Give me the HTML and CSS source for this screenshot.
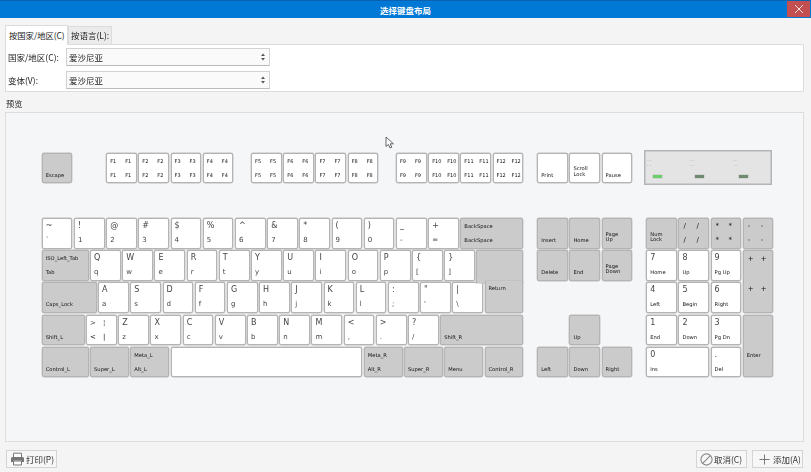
FILE: index.html
```html
<!DOCTYPE html>
<html lang="zh-CN">
<head>
    <meta charset="UTF-8">
    <title>选择键盘布局</title>
    <link rel="stylesheet" href="styles.css">
</head>
<body>
<div class="titlebar">
    <span class="title">选择键盘布局</span>
    <span class="close">
        <svg width="10" height="10" viewBox="0 0 10 10"><path d="M1 1L9 9M9 1L1 9" stroke="#f6dede" stroke-width="1"/></svg>
    </span>
</div>

<div class="content">
    <div class="tabs">
        <span class="tab active">按国家/地区(C)</span>
        <span class="tab">按语言(L):</span>
    </div>
    <div class="panel">
        <div class="field">
            <label>国家/地区(C):</label>
            <div class="combo">爱沙尼亚
                <svg width="4" height="8" viewBox="0 0 5 9"><path d="M2.5 0L5 3.4H0ZM2.5 9L0 5.6H5Z" fill="#555"/></svg>
            </div>
        </div>
        <div class="field">
            <label>变体(V):</label>
            <div class="combo">爱沙尼亚
                <svg width="4" height="8" viewBox="0 0 5 9"><path d="M2.5 0L5 3.4H0ZM2.5 9L0 5.6H5Z" fill="#555"/></svg>
            </div>
        </div>
    </div>

    <div class="preview-label">预览</div>
    <div class="preview">
        <svg class="cursor" width="10" height="13" viewBox="0 0 10 13"><path d="M1 1V10.5L3.4 8.4L5 12L6.8 11.2L5.2 7.8H8.4Z" fill="#fff" stroke="#555" stroke-width="0.9"/></svg>
        <div class="kb">
            <!-- function row -->
            <div class="block main">
                <div class="key dark"><span class="low">Escape</span></div>
                <div class="sp w8"></div>
                <div class="key fn"><span>F1</span><span>F1</span><span>F1</span><span>F1</span></div>
                <div class="key fn"><span>F2</span><span>F2</span><span>F2</span><span>F2</span></div>
                <div class="key fn"><span>F3</span><span>F3</span><span>F3</span><span>F3</span></div>
                <div class="key fn"><span>F4</span><span>F4</span><span>F4</span><span>F4</span></div>
                <div class="sp w4"></div>
                <div class="key fn"><span>F5</span><span>F5</span><span>F5</span><span>F5</span></div>
                <div class="key fn"><span>F6</span><span>F6</span><span>F6</span><span>F6</span></div>
                <div class="key fn"><span>F7</span><span>F7</span><span>F7</span><span>F7</span></div>
                <div class="key fn"><span>F8</span><span>F8</span><span>F8</span><span>F8</span></div>
                <div class="sp w4"></div>
                <div class="key fn"><span>F9</span><span>F9</span><span>F9</span><span>F9</span></div>
                <div class="key fn"><span>F10</span><span>F10</span><span>F10</span><span>F10</span></div>
                <div class="key fn"><span>F11</span><span>F11</span><span>F11</span><span>F11</span></div>
                <div class="key fn"><span>F12</span><span>F12</span><span>F12</span><span>F12</span></div>
            </div>
            <div class="block nav">
                <div class="key"><span class="low">Print</span></div>
                <div class="key"><span class="stack">Scroll<br>Lock</span></div>
                <div class="key"><span class="low">Pause</span></div>
            </div>
            <div class="indicators">
                <div class="ind"><span>···<br>···</span><i class="led on"></i></div>
                <div class="ind"><span>···<br>···</span><i class="led"></i></div>
                <div class="ind"><span>···<br>···</span><i class="led"></i></div>
            </div>

            <!-- main block -->
            <div class="block main">
                <div class="key sym"><span>~</span><span>`</span></div>
                <div class="key sym"><span>!</span><span>1</span></div>
                <div class="key sym"><span>@</span><span>2</span></div>
                <div class="key sym"><span>#</span><span>3</span></div>
                <div class="key sym"><span>$</span><span>4</span></div>
                <div class="key sym"><span>%</span><span>5</span></div>
                <div class="key sym"><span>^</span><span>6</span></div>
                <div class="key sym"><span>&amp;</span><span>7</span></div>
                <div class="key sym"><span>*</span><span>8</span></div>
                <div class="key sym"><span>(</span><span>9</span></div>
                <div class="key sym"><span>)</span><span>0</span></div>
                <div class="key sym"><span>_</span><span>-</span></div>
                <div class="key sym"><span>+</span><span>=</span></div>
                <div class="key dark w16"><span>BackSpace</span><span>BackSpace</span></div>

                <div class="key dark w12"><span>ISO_Left_Tab</span><span>Tab</span></div>
                <div class="key sym"><span>Q</span><span>q</span></div>
                <div class="key sym"><span>W</span><span>w</span></div>
                <div class="key sym"><span>E</span><span>e</span></div>
                <div class="key sym"><span>R</span><span>r</span></div>
                <div class="key sym"><span>T</span><span>t</span></div>
                <div class="key sym"><span>Y</span><span>y</span></div>
                <div class="key sym"><span>U</span><span>u</span></div>
                <div class="key sym"><span>I</span><span>i</span></div>
                <div class="key sym"><span>O</span><span>o</span></div>
                <div class="key sym"><span>P</span><span>p</span></div>
                <div class="key sym"><span>{</span><span>[</span></div>
                <div class="key sym"><span>}</span><span>]</span></div>
                <div class="key dark w12 ret-top"></div>

                <div class="key dark w14"><span class="low">Caps_Lock</span></div>
                <div class="key sym"><span>A</span><span>a</span></div>
                <div class="key sym"><span>S</span><span>s</span></div>
                <div class="key sym"><span>D</span><span>d</span></div>
                <div class="key sym"><span>F</span><span>f</span></div>
                <div class="key sym"><span>G</span><span>g</span></div>
                <div class="key sym"><span>H</span><span>h</span></div>
                <div class="key sym"><span>J</span><span>j</span></div>
                <div class="key sym"><span>K</span><span>k</span></div>
                <div class="key sym"><span>L</span><span>l</span></div>
                <div class="key sym"><span>:</span><span>;</span></div>
                <div class="key sym"><span>"</span><span>'</span></div>
                <div class="key sym"><span>|</span><span>\</span></div>
                <div class="key dark w10 ret-bot"><span>Return</span></div>

                <div class="key dark w11"><span class="low">Shift_L</span></div>
                <div class="key sym quad"><span>&gt;</span><span>¦</span><span>&lt;</span><span>|</span></div>
                <div class="key sym"><span>Z</span><span>z</span></div>
                <div class="key sym"><span>X</span><span>x</span></div>
                <div class="key sym"><span>C</span><span>c</span></div>
                <div class="key sym"><span>V</span><span>v</span></div>
                <div class="key sym"><span>B</span><span>b</span></div>
                <div class="key sym"><span>N</span><span>n</span></div>
                <div class="key sym"><span>M</span><span>m</span></div>
                <div class="key sym"><span>&lt;</span><span>,</span></div>
                <div class="key sym"><span>&gt;</span><span>.</span></div>
                <div class="key sym"><span>?</span><span>/</span></div>
                <div class="key dark w21"><span class="low">Shift_R</span></div>

                <div class="key dark w12"><span class="low">Control_L</span></div>
                <div class="key dark w10"><span class="low">Super_L</span></div>
                <div class="key dark w10"><span>Meta_L</span><span>Alt_L</span></div>
                <div class="key w48"></div>
                <div class="key dark w10"><span>Meta_R</span><span>Alt_R</span></div>
                <div class="key dark w10"><span class="low">Super_R</span></div>
                <div class="key dark w10"><span class="low">Menu</span></div>
                <div class="key dark w10"><span class="low">Control_R</span></div>
            </div>

            <!-- navigation block -->
            <div class="block nav">
                <div class="key dark"><span class="low">Insert</span></div>
                <div class="key dark"><span class="low">Home</span></div>
                <div class="key dark"><span class="stack">Page<br>Up</span></div>
                <div class="key dark"><span class="low">Delete</span></div>
                <div class="key dark"><span class="low">End</span></div>
                <div class="key dark"><span class="stack">Page<br>Down</span></div>
                <div class="sp w24"></div>
                <div class="sp w8"></div>
                <div class="key dark"><span class="low">Up</span></div>
                <div class="sp w8"></div>
                <div class="key dark"><span class="low">Left</span></div>
                <div class="key dark"><span class="low">Down</span></div>
                <div class="key dark"><span class="low">Right</span></div>
            </div>

            <!-- keypad -->
            <div class="block pad">
                <div class="key dark"><span class="stack">Num<br>Lock</span></div>
                <div class="key dark quad"><span>/</span><span>/</span><span>/</span><span>/</span></div>
                <div class="key dark quad"><span>*</span><span>*</span><span>*</span><span>*</span></div>
                <div class="key dark quad"><span>-</span><span>-</span><span>-</span><span>-</span></div>
                <div class="key kp"><span>7</span><span>Home</span></div>
                <div class="key kp"><span>8</span><span>Up</span></div>
                <div class="key kp"><span>9</span><span>Pg Up</span></div>
                <div class="key dark quad tall"><span>+</span><span>+</span><span>+</span><span>+</span></div>
                <div class="key kp"><span>4</span><span>Left</span></div>
                <div class="key kp"><span>5</span><span>Begin</span></div>
                <div class="key kp"><span>6</span><span>Right</span></div>
                <div class="key kp"><span>1</span><span>End</span></div>
                <div class="key kp"><span>2</span><span>Down</span></div>
                <div class="key kp"><span>3</span><span>Pg Dn</span></div>
                <div class="key dark tall enter"><span class="low">Enter</span></div>
                <div class="key kp w16"><span>0</span><span>Ins</span></div>
                <div class="key kp"><span>.</span><span>Del</span></div>
            </div>
        </div>
    </div>

    <div class="buttons">
        <button class="btn print">
            <svg width="15" height="14" viewBox="0 0 15 14"><path d="M3.5 5V1.2H11.5V5" fill="#fff" stroke="#777"/><path d="M1 10V6.5Q1 5 2.5 5H12.5Q14 5 14 6.5V10H11.5V8.5H3.5V10Z" fill="#777"/><path d="M3.5 9H11.5V13H3.5Z" fill="#fff" stroke="#777"/></svg>
            打印(P)
        </button>
        <div class="right">
            <button class="btn">
                <svg width="13" height="13" viewBox="0 0 13 13"><circle cx="6.5" cy="6.5" r="5.6" fill="none" stroke="#888" stroke-width="1.1"/><path d="M2.6 10.4L10.4 2.6" stroke="#888" stroke-width="1.1"/></svg>
                取消(C)
            </button>
            <button class="btn add">
                <svg width="11" height="11" viewBox="0 0 11 11"><path d="M5.5 0.5V10.5M0.5 5.5H10.5" stroke="#777" stroke-width="1"/></svg>
                添加(A)
            </button>
        </div>
    </div>
</div>
</body>
</html>
```

FILE: styles.css
```css
html, body {
    margin: 0;
    height: 100%;
    overflow: hidden;
}

body {
    background-color: #f4f4f4;
    font-family: "Noto Sans CJK SC", "Noto Sans", sans-serif;
    font-size: 8.5px;
    color: #222;
    filter: blur(0.35px);
}

.titlebar {
    height: 17px;
    margin-bottom: 1px;
    border-top: 1px solid #0a62b0;
    background-color: #0078d6;
    display: flex;
    justify-content: center;
    align-items: center;
    position: relative;
}

.title {
    color: #fff;
    font-weight: 700;
}

.close {
    position: absolute;
    right: 1px;
    top: 0;
    width: 23px;
    height: 16px;
    background-color: #c44f50;
    display: flex;
    justify-content: center;
    align-items: center;
}

.content {
    padding: 7px 7px 0 5px;
}

/* tabs */
.tabs {
    display: flex;
    align-items: flex-end;
    height: 18px;
}

.tab {
    display: block;
    height: 17px;
    line-height: 17px;
    padding: 0 2px;
    border: 1px solid #dcdcdc;
    border-bottom: none;
    background-color: #ebebeb;
}

.tab.active {
    height: 19px;
    line-height: 19px;
    padding: 0 0 0 3px;
    width: 58px;
    font-size: 8.3px;
    background-color: #fff;
    margin-bottom: -1px;
    position: relative;
}

.panel {
    height: 44px;
    border: 1px solid #dcdcdc;
    background-color: #fff;
    padding-top: 2px;
    display: flex;
    flex-direction: column;
    gap: 4px;
}

.field {
    display: flex;
    align-items: center;
    height: 19px;
}

.field label {
    width: 60px;
    box-sizing: border-box;
    padding-left: 2px;
}

.combo {
    width: 204px;
    height: 18px;
    box-sizing: border-box;
    border: 1px solid #d2d2d2;
    border-bottom-color: #bbb;
    background-color: #fafafa;
    padding: 0 4px 0 2px;
    display: flex;
    justify-content: space-between;
    align-items: center;
}

.preview-label {
    margin: 5px 0 0 1px;
    height: 15px;
    line-height: 12px;
    font-size: 8.2px;
}

.preview {
    position: relative;
    height: 330px;
    box-sizing: border-box;
    border: 1px solid #dcdcdc;
    background-color: #f5f6f8;
    padding: 39px 0 0 35px;
}

.cursor {
    position: absolute;
    left: 379px;
    top: 23px;
}

/* keyboard */
.kb {
    display: grid;
    grid-template-columns: 483px 96.5px 128.7px;
    grid-template-rows: 32px 161px;
    column-gap: 12.5px;
    row-gap: 33.5px;
    font-family: "DejaVu Sans", sans-serif;
    will-change: transform;
}

.block {
    display: grid;
    grid-auto-rows: 32.1px;
}

.main { grid-template-columns: repeat(120, 1fr); }
.nav { grid-template-columns: repeat(24, 1fr); }
.pad { grid-template-columns: repeat(32, 1fr); }

.key {
    grid-column: span 8;
    margin: 0.75px;
    box-sizing: border-box;
    border: 1px solid #b4b4b4;
    box-shadow: 0 0 0 0.4px #bcbcbc;
    border-radius: 2px;
    background-color: #fff;
    display: grid;
    grid-template-rows: 14px 14px;
    padding-left: 3px;
    font-size: 5.2px;
    color: #111;
    min-width: 0;
    white-space: nowrap;
}

.key span {
    align-self: center;
    line-height: 8px;
}

.dark {
    background-color: #cbcbcb;
    color: #111;
}

.sp { min-width: 0; }
.w4 { grid-column: span 4; }
.w8 { grid-column: span 8; }
.w10 { grid-column: span 10; }
.w11 { grid-column: span 11; }
.w12 { grid-column: span 12; }
.w14 { grid-column: span 14; }
.w16 { grid-column: span 16; }
.w21 { grid-column: span 21; }
.w24 { grid-column: span 24; }
.w48 { grid-column: span 48; }

.key .low { grid-row: 2; }

.key .stack {
    grid-row: 1 / span 2;
    line-height: 5.4px;
    padding-top: 8px;
}

.fn {
    grid-template-columns: 15px 14px;
    font-size: 5px;
}

.sym span:nth-child(1) { font-size: 8px; color: #444; }
.sym span:nth-child(2) { font-size: 7px; color: #444; }

.kp span:nth-child(1) { font-size: 8px; color: #444; }

.quad { grid-template-columns: 13px 13px; }
.dark.quad { padding-left: 4px; }

.quad span:nth-child(n) { font-size: 7px; }

.tall {
    grid-row: span 2;
    grid-template-rows: 16px 44px;
}

.enter { grid-template-rows: 32px 14px; }

.ret-top {
    border-bottom: none;
    border-bottom-left-radius: 0;
    border-bottom-right-radius: 0;
    margin-bottom: -1px;
    z-index: 1;
}

.ret-bot {
    border-top: none;
    border-top-left-radius: 0;
    border-top-right-radius: 0;
    margin-top: -1px;
    z-index: 2;
    grid-template-rows: 15px;
}

.indicators {
    margin: -2px 2px -1px -1.5px;
    box-sizing: border-box;
    border: 1px solid #b4b4b4;
    box-shadow: inset 0 0 0 0.5px #b4b4b4;
    background-color: #e4e4e4;
    display: grid;
    grid-template-columns: 42.3px 43.7px 1fr;
    padding-left: 2px;
}

.ind {
    display: flex;
    flex-direction: column;
    color: #999;
    font-size: 5px;
    line-height: 5px;
    padding-top: 7px;
}

.led {
    display: block;
    width: 9px;
    height: 3px;
    margin: 7px 0 0 6px;
    background-color: #6f8a6f;
    box-shadow: 0 0 0 0.5px #c4c4c4;
}

.led.on { background-color: #6bcf6b; }

/* bottom buttons */
.buttons {
    display: flex;
    justify-content: space-between;
    margin-top: 8px;
    padding: 0 1px;
}

.right {
    display: flex;
    gap: 5px;
}

.btn {
    height: 18px;
    width: 51px;
    padding: 0 0 0 3px;
    border: 1px solid #d4d4d4;
    background-color: #f7f7f7;
    font-family: inherit;
    font-size: 8.5px;
    color: #333;
    display: flex;
    align-items: center;
    gap: 1px;
    white-space: nowrap;
}

.btn.add {
    gap: 3px;
    padding-left: 6px;
}
```
